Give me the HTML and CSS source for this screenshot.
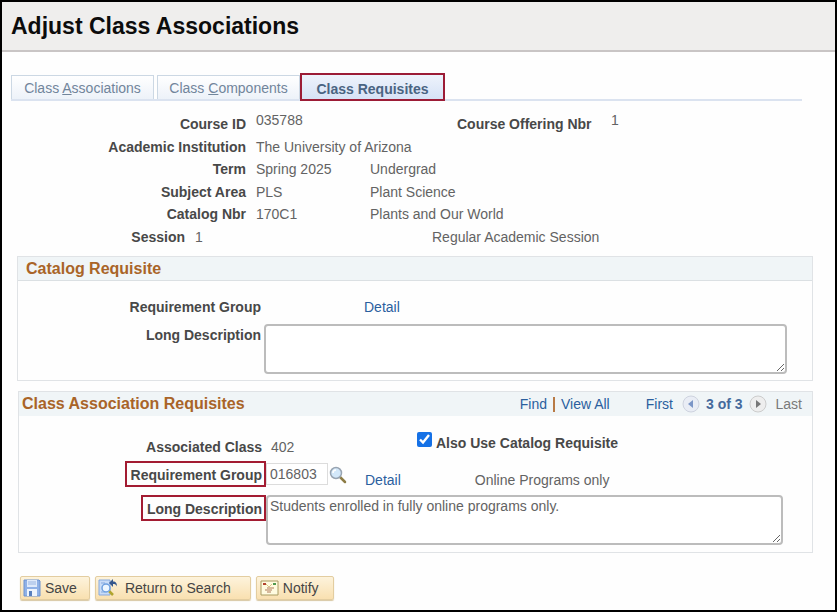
FILE: index.html
```html
<!DOCTYPE html>
<html lang="en">
<head>
  <meta charset="UTF-8">
  <title>Adjust Class Associations</title>
  <link rel="stylesheet" href="styles.css">
</head>
<body>
  <header class="page-header">
    <h1>Adjust Class Associations</h1>
  </header>

  <nav class="tabs">
    <a class="tab" href="#associations">Class <u>A</u>ssociations</a>
    <a class="tab" href="#components">Class <u>C</u>omponents</a>
    <a class="tab active" href="#requisites">Class Requisites</a>
  </nav>

  <main>
    <section class="info">
      <div class="info-row offering">
        <span class="label">Course ID</span>
        <span class="value">035788</span>
        <span class="label">Course Offering Nbr</span>
        <span class="value">1</span>
      </div>
      <div class="info-row">
        <span class="label">Academic Institution</span>
        <span>The University of Arizona</span>
      </div>
      <div class="info-row term">
        <span class="label">Term</span>
        <span>Spring 2025</span>
        <span>Undergrad</span>
      </div>
      <div class="info-row">
        <span class="label">Subject Area</span>
        <span>PLS</span>
        <span>Plant Science</span>
      </div>
      <div class="info-row">
        <span class="label">Catalog Nbr</span>
        <span>170C1</span>
        <span>Plants and Our World</span>
      </div>
      <div class="info-row session">
        <span class="label">Session</span>
        <span>1</span>
        <span>Regular Academic Session</span>
      </div>
    </section>

    <section class="panel catalog">
      <div class="panel-title">
        <h2>Catalog Requisite</h2>
      </div>
      <div class="panel-body">
        <div class="field">
          <span class="label">Requirement Group</span>
          <a class="detail" href="#detail">Detail</a>
        </div>
        <div class="field">
          <label class="label" for="catalog-desc">Long Description</label>
          <textarea id="catalog-desc"></textarea>
        </div>
      </div>
    </section>

    <section class="panel association">
      <div class="panel-title">
        <h2>Class Association Requisites</h2>
        <div class="find">
          <a href="#find">Find</a>
          <span class="divider"></span>
          <a href="#all">View All</a>
        </div>
        <div class="pager">
          <a href="#first">First</a>
          <button type="button" class="round" aria-label="Previous">
            <svg width="18" height="18" viewBox="0 0 18 18">
              <circle cx="9" cy="9" r="8" fill="#e9edf5" stroke="#ced3df"/>
              <path d="M11 5v8L6 9z" fill="#7b96c7"/>
            </svg>
          </button>
          <strong>3 of 3</strong>
          <button type="button" class="round" aria-label="Next">
            <svg width="18" height="18" viewBox="0 0 18 18">
              <circle cx="9" cy="9" r="8" fill="#eeeeee" stroke="#cccccc"/>
              <path d="M7 5v8l5-4z" fill="#777777"/>
            </svg>
          </button>
          <span class="last">Last</span>
        </div>
      </div>
      <div class="panel-body">
        <div class="field class-field">
          <span class="label">Associated Class</span>
          <span class="class-value">402</span>
          <input id="also-use" type="checkbox" checked>
          <label class="check-label" for="also-use">Also Use Catalog Requisite</label>
        </div>
        <div class="field group-field">
          <div class="label"><label class="marked" for="group">Requirement Group</label></div>
          <input class="group-input" id="group" type="text" value="016803">
          <button type="button" class="lookup" aria-label="Look up">
            <svg width="18" height="18" viewBox="0 0 18 18">
              <path d="M11 11l5 5" stroke="#8d7c45" stroke-width="2.5" stroke-linecap="round"/>
              <circle cx="7" cy="7" r="5.500" fill="#d3e8fa" stroke="#98a4b2" stroke-width="1.5"/>
              <path d="M4 7a3 3 0 0 1 3-3" fill="none" stroke="#fff" stroke-width="1.5"/>
            </svg>
          </button>
          <a class="detail" href="#detail">Detail</a>
          <span class="group-name">Online Programs only</span>
        </div>
        <div class="field">
          <div class="label"><label class="marked" for="assoc-desc">Long Description</label></div>
          <textarea id="assoc-desc">Students enrolled in fully online programs only.</textarea>
        </div>
      </div>
    </section>

    <div class="actions">
      <button type="button" class="btn save">
        <svg width="18" height="18" viewBox="0 0 18 18">
          <path d="M1 1h15l1 1v15H1z" fill="#8fb1e6" stroke="#6d92d0"/>
          <path d="M4 1h10v7H4z" fill="#dfeafa"/>
          <path d="M5 3h8M5 5h8" stroke="#9ab6e2"/>
          <path d="M4 10h10v7H4z" fill="#eef4fc"/>
          <path d="M6 12h3v5H6z" fill="#587fbd"/>
        </svg>
        Save
      </button>
      <button type="button" class="btn return">
        <svg width="20" height="18" viewBox="0 0 20 18">
          <path d="M1 1h11v15H1z" fill="#c9dcf7" stroke="#86a9df"/>
          <path d="M3 4h4M3 13h4" stroke="#86a9df"/>
          <path d="M11 12l4 4" stroke="#b1a52e" stroke-width="2.5"/>
          <circle cx="8" cy="9" r="4" fill="#edf6ff" stroke="#6fa0df" stroke-width="1.5"/>
          <path d="M11 4l4-4v2.500c3 0 4 2 4 5-1-2-2-2.500-4-2.500v3z" fill="#34568c"/>
        </svg>
        Return to Search
      </button>
      <button type="button" class="btn notify">
        <svg width="19" height="16" viewBox="0 0 19 16">
          <path d="M1 1h17v14H1z" fill="#fffbe0" stroke="#a99c63"/>
          <path d="M3 4h3" stroke="#b5442f" stroke-width="2"/>
          <path d="M13 4h3" stroke="#4f9a4e" stroke-width="2"/>
          <path d="M6 4l3 3 3-3" fill="none" stroke="#d9c98b"/>
          <path d="M7 8h7M5 10h7M7 12h4" stroke="#b07a5a"/>
        </svg>
        Notify
      </button>
    </div>
  </main>
</body>
</html>
```
FILE: styles.css
```css
* {
  margin: 0;
  padding: 0;
  box-sizing: border-box;
}

body {
  min-height: 100vh;
  border: 2px solid #000;
  background: #fefefe;
  color: #636363;
  font-family: "Liberation Sans", Arial, sans-serif;
  font-size: 14px;
  line-height: 16px;
}

a {
  color: #2b5f9e;
  text-decoration: none;
}

button,
input,
textarea {
  font: inherit;
  color: inherit;
}

.page-header {
  height: 50px;
  padding: 10px 9px;
  background: #efeeed;
  border-bottom: 2px solid #c9c5c5;
}

.page-header h1 {
  font-size: 23px;
  line-height: 28px;
  color: #0c0c0c;
}

/* tabs */
.tabs {
  display: flex;
  align-items: flex-end;
  margin: 21px 33px 0 9px;
  border-bottom: 2px solid #dbe3f0;
}

.tab {
  height: 24px;
  width: 143px;
  margin-right: 3px;
  border: 1px solid #ccd8e4;
  border-bottom: 0;
  background: linear-gradient(#fff, #edf2f9);
  color: #71859b;
  line-height: 24px;
  text-align: center;
}

.tab.active {
  width: 145px;
  height: 28px;
  margin: 0 0 -2px -3px;
  border: 2px solid #9c1c36;
  background: linear-gradient(#eef3fc, #d6e2f6);
  color: #4a6482;
  font-weight: bold;
  line-height: 28px;
}

.label {
  color: #484848;
  font-weight: bold;
  text-align: right;
  white-space: nowrap;
}

/* course info */
.info {
  padding: 11px 0 7px;
}

.info-row {
  display: grid;
  grid-template-columns: 244px 104px auto;
  column-gap: 10px;
  line-height: 22px;
  white-space: nowrap;
}

.info-row.offering {
  grid-template-columns: 244px 191px 136px auto;
  line-height: 24px;
}

.info-row.offering .label:nth-child(3) {
  text-align: left;
}

.info-row.offering .value {
  line-height: 16px;
}

.info-row.offering .value:last-child {
  padding-left: 8px;
}

.info-row.term {
  line-height: 23px;
}

.info-row.session {
  grid-template-columns: 183px 227px auto;
  line-height: 24px;
}

/* panels */
.panel {
  margin: 0 22px 10px 15px;
  border: 1px solid #e0e3e6;
}

.panel-title {
  display: flex;
  align-items: center;
  height: 24px;
  padding-left: 8px;
  background: #f0f5f7;
}

.panel-title h2 {
  font-size: 16px;
  line-height: 20px;
  color: #a96428;
}

.field {
  display: flex;
  align-items: flex-start;
}

.field .label {
  flex: none;
  width: 243px;
}

textarea {
  display: block;
  flex: 1;
  height: 50px;
  padding: 2px;
  border: 2px solid #bcbcbc;
  border-radius: 4px;
  background: #fff;
}

.catalog .panel-title {
  border-bottom: 1px solid #dbe0e3;
}

.catalog .panel-body {
  padding: 18px 25px 6px 0;
}

.catalog .field + .field {
  margin-top: 9px;
}

.catalog .detail {
  margin-left: 103px;
}

.catalog textarea {
  margin-left: 3px;
}

.catalog label {
  padding-top: 3px;
}

.association {
  margin-left: 16px;
}

.association .panel-title {
  padding: 0 10px 0 3px;
}

.find,
.pager {
  display: flex;
  align-items: center;
}

.find {
  margin-left: auto;
  gap: 6px;
}

.divider {
  width: 2px;
  height: 15px;
  background: #b87a45;
}

.pager {
  margin-left: 36px;
  gap: 9px;
}

.pager strong {
  margin: 0 -3px;
  color: #456a9c;
}

.round,
.lookup {
  display: flex;
  border: 0;
  background: none;
}

.last {
  color: #7a7a7a;
}

.association .panel-body {
  padding: 16px 29px 7px 0;
}

.association .field .label {
  width: 247px;
}

.class-field .label {
  padding: 7px 4px 0 0;
}

.class-value {
  width: 151px;
  padding: 7px 0 0 5px;
}

.class-field input {
  width: 15px;
  height: 15px;
  accent-color: #1571e6;
}

.check-label {
  padding: 3px 0 0 4px;
  color: #484848;
  font-weight: bold;
}

.group-field {
  height: 34px;
  margin-top: 6px;
}

.marked {
  display: inline-block;
  height: 26px;
  padding: 4px 2px 2px 4px;
  border: 2px solid #a31c32;
}

.group-input {
  width: 62px;
  height: 22px;
  margin-top: 2px;
  padding: 0 3px;
  border: 1px solid #dcdcdc;
  background: #fff;
}

.lookup {
  margin: 5px 0 0 1px;
}

.group-field .detail,
.group-name {
  padding-top: 11px;
}

.group-field .detail {
  margin-left: 18px;
}

.group-name {
  margin-left: 74px;
}

.association textarea {
  padding: 1px 2px;
}

/* bottom buttons */
.actions {
  display: flex;
  gap: 5px;
  padding: 13px 18px 8px;
}

.btn {
  display: flex;
  align-items: center;
  gap: 4px;
  height: 24px;
  border: 1px solid #e3cda0;
  border-radius: 2px;
  background: linear-gradient(#fdf3dc, #f9e0b0);
  box-shadow: 0 1px 1px #d8c7a2;
  color: #454545;
}

.save {
  padding: 0 12px 0 2px;
}

.return {
  gap: 7px;
  padding: 0 19px 0 2px;
}

.notify {
  padding: 0 14px 0 3px;
}
```
